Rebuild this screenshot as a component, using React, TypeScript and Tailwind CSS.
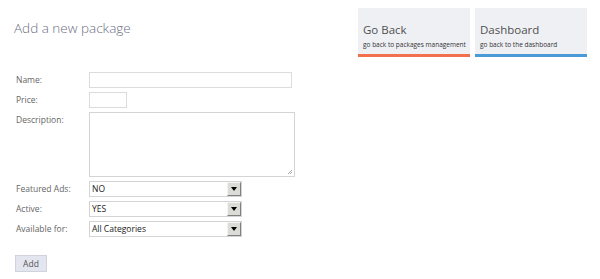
import React from "react";

const font = { fontFamily: '"Open Sans", "Noto Sans", sans-serif' };

function Tile({ title, sub, bar }: { title: string; sub: string; bar: string }) {
  return (
    <div className={`w-[112px] h-[49px] bg-[#eff0f4] border-b-[3px] ${bar} pl-[5px] pt-[15px]`}>
      <div className="text-[11.5px] leading-[14px] text-[#505050]">{title}</div>
      <div className="text-[6.5px] leading-[9px] mt-[3px] text-[#333] whitespace-nowrap">{sub}</div>
    </div>
  );
}

function Select({ value }: { value: string }) {
  return (
    <div className="flex w-[153px] h-[16px] border border-[#d4d4d4] bg-white">
      <div className="flex-1 pl-[2px] text-[8.5px] leading-[14px] text-[#222]">{value}</div>
      <div className="w-[14px] h-[14px] bg-[#dcdcd6] border-l border-t border-[#f4f4f4] border-r-[#808080] border-b-[#808080] border-r border-b flex items-center justify-center">
        <div className="w-0 h-0 border-l-[3.5px] border-r-[3.5px] border-t-[4px] border-l-transparent border-r-transparent border-t-black" />
      </div>
    </div>
  );
}

function Row({ label, children }: { label: string; children: React.ReactNode }) {
  return (
    <div className="flex">
      <div className="w-[75px] pl-[2px] pt-[1px] text-[8.5px] leading-[14px] text-[#666]">{label}</div>
      {children}
    </div>
  );
}

export default function App() {
  return (
    <div className="w-[600px] h-[279px] bg-white" style={font}>
      <div className="flex justify-between pl-[14px] pr-[13px] pt-[8px]">
        <h1 className="pt-[11px] text-[13.5px] leading-[18px] font-light text-[#6b7080]">Add a new package</h1>
        <div className="flex gap-[5px]">
          <Tile title="Go Back" sub="go back to packages management" bar="border-[#f2704e]" />
          <Tile title="Dashboard" sub="go back to the dashboard" bar="border-[#4b9ad8]" />
        </div>
      </div>

      <div className="pl-[14px] mt-[15px] flex flex-col gap-[4px]">
        <Row label="Name:">
          <div className="w-[203px] h-[16px] border border-[#dcdcdc] bg-white" />
        </Row>
        <Row label="Price:">
          <div className="w-[38px] h-[16px] border border-[#dcdcdc] bg-white" />
        </Row>
        <Row label="Description:">
          <div className="relative w-[206px] h-[65px] border border-[#d4d4d4] bg-white">
            <svg className="absolute right-[1px] bottom-[1px]" width="6" height="6" viewBox="0 0 6 6">
              <path d="M5 1 L1 5 M5 3 L3 5" stroke="#999" strokeWidth="0.8" />
            </svg>
          </div>
        </Row>
        <Row label="Featured Ads:">
          <Select value="NO" />
        </Row>
        <Row label="Active:">
          <Select value="YES" />
        </Row>
        <Row label="Available for:">
          <Select value="All Categories" />
        </Row>
      </div>

      <div className="pl-[15px] mt-[12px]">
        <button className="w-[32px] h-[17px] bg-[#e4e6ef] border border-[#d0d3de] text-[8.5px] leading-[15px] text-[#555]">Add</button>
      </div>
    </div>
  );
}
